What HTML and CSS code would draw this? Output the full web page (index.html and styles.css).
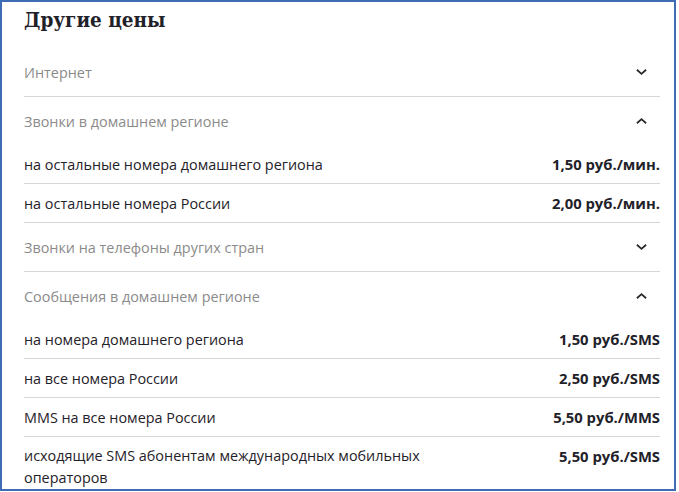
FILE: index.html
```html
<!DOCTYPE html>
<html lang="ru">
<head>
<meta charset="utf-8">
<link rel="stylesheet" href="styles.css">
</head>
<body>
<div class="frame">
  <h2 class="title">Другие цены</h2>
  <div class="acc">
    <div class="head"><span>Интернет</span><svg class="chev" viewBox="0 0 12 8"><path d="M1 1.5 L6 6 L11 1.5"/></svg></div>
  </div>
  <div class="acc open">
    <div class="head"><span>Звонки в домашнем регионе</span><svg class="chev" viewBox="0 0 12 8"><path d="M1 6.5 L6 2 L11 6.5"/></svg></div>
    <div class="row"><span class="name">на остальные номера домашнего региона</span><span class="price">1,50 руб./мин.</span></div>
    <div class="row"><span class="name">на остальные номера России</span><span class="price">2,00 руб./мин.</span></div>
  </div>
  <div class="acc">
    <div class="head"><span>Звонки на телефоны других стран</span><svg class="chev" viewBox="0 0 12 8"><path d="M1 1.5 L6 6 L11 1.5"/></svg></div>
  </div>
  <div class="acc open">
    <div class="head"><span>Сообщения в домашнем регионе</span><svg class="chev" viewBox="0 0 12 8"><path d="M1 6.5 L6 2 L11 6.5"/></svg></div>
    <div class="row"><span class="name">на номера домашнего региона</span><span class="price">1,50 руб./SMS</span></div>
    <div class="row"><span class="name">на все номера России</span><span class="price">2,50 руб./SMS</span></div>
    <div class="row"><span class="name">MMS на все номера России</span><span class="price">5,50 руб./MMS</span></div>
    <div class="row last"><span class="name">исходящие SMS абонентам международных мобильных операторов</span><span class="price">5,50 руб./SMS</span></div>
  </div>
</div>
</body>
</html>
```
FILE: styles.css
```css
html, body {
  margin: 0;
  padding: 0;
  background: #ffffff;
}
.frame {
  box-sizing: border-box;
  width: 676px;
  height: 491px;
  border: 2px solid #3f6db5;
  padding: 0 14px 0 22px;
  overflow: hidden;
  font-family: "Open Sans", "Noto Sans", sans-serif;
  font-size: 14.4px;
  color: #1f2229;
}
.title {
  margin: 0;
  height: 46px;
  box-sizing: border-box;
  padding-top: 5px;
  font-family: "DejaVu Serif", serif;
  font-stretch: condensed;
  font-weight: bold;
  font-size: 20.5px;
  line-height: 26px;
  color: #1f2229;
}
.acc {
  border-bottom: 1px solid #d6d6d6;
}
.acc.open {
  border-bottom: none;
}
.head {
  height: 48px;
  display: flex;
  align-items: center;
  justify-content: space-between;
  color: #8b8b8b;
  font-size: 14.4px;
}
.chev {
  width: 11px;
  height: 8px;
  margin-right: 13px;
  fill: none;
  stroke: #2b2b2b;
  stroke-width: 2;
}
.row {
  height: 38px;
  display: flex;
  align-items: center;
  justify-content: space-between;
  border-bottom: 1px solid #d6d6d6;
}
.row.last {
  height: auto;
  align-items: flex-start;
  padding-top: 8px;
  border-bottom: none;
  line-height: 22px;
}
.name {
  max-width: 420px;
}
.price {
  font-weight: bold;
  font-size: 14.8px;
  white-space: nowrap;
}
```
